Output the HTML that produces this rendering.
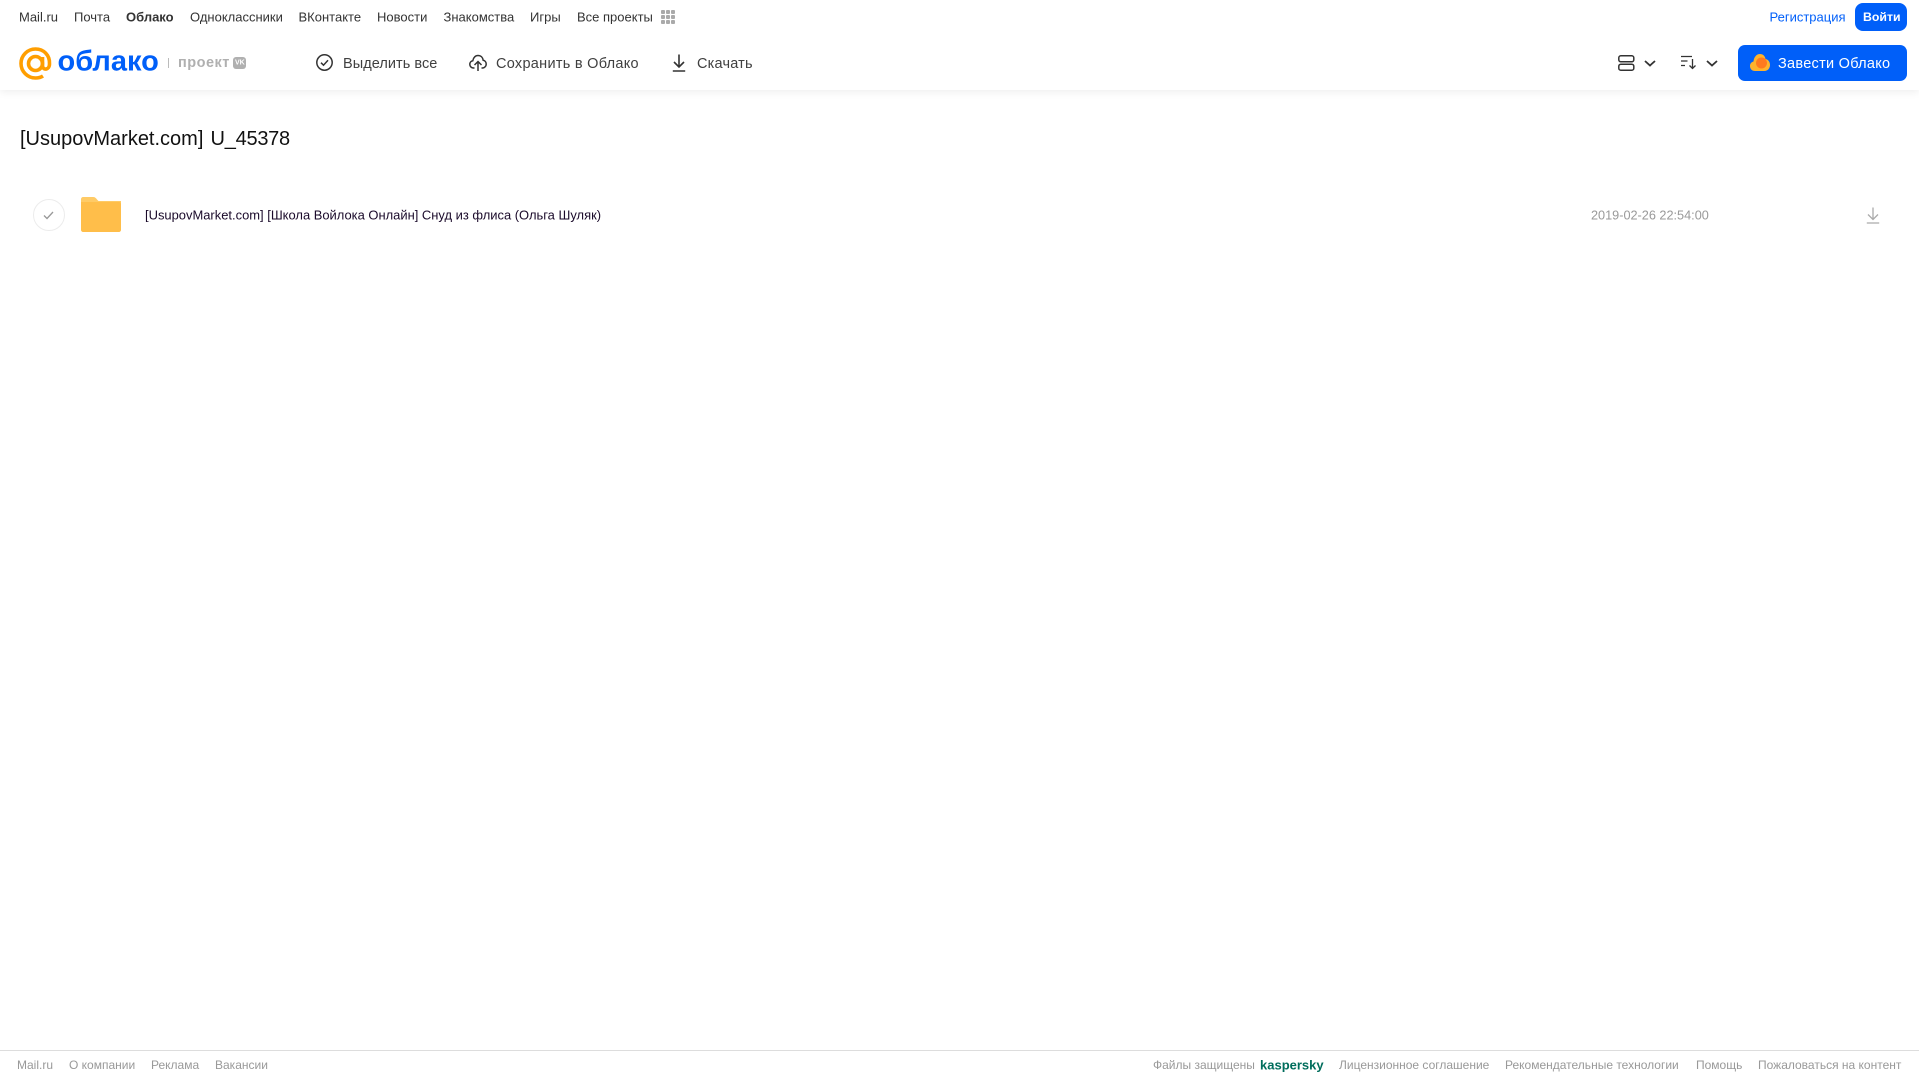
<!DOCTYPE html>
<html lang="ru"><head><meta charset="utf-8"><title>Облако</title>
<style>
html,body{margin:0;padding:0;background:#fff}
#p{position:relative;width:1919px;height:1079px;overflow:hidden;background:#fff;font-family:"Liberation Sans",Arial,sans-serif}
.t{position:absolute;white-space:nowrap;transform:translateY(-50%);line-height:1}
.n{font-size:13px;color:#333;top:16.5px}
.a{font-size:14.5px;color:#404040;top:63.5px}
.f{font-size:12px;color:#999;top:1064.5px}
svg{position:absolute;overflow:visible}
#hd{position:absolute;left:0;top:0;width:1919px;height:90px;background:#fff;box-shadow:0 2px 8px rgba(0,0,0,.07)}
</style></head><body><div id="p">
<div id="hd"></div>
<span class="t n" style="left:19px">Mail.ru</span>
<span class="t n" style="left:74px">Почта</span>
<span class="t n" style="left:126px;font-weight:bold">Облако</span>
<span class="t n" style="left:190px">Одноклассники</span>
<span class="t n" style="left:298.500px">ВКонтакте</span>
<span class="t n" style="left:377px">Новости</span>
<span class="t n" style="left:443.500px">Знакомства</span>
<span class="t n" style="left:530px">Игры</span>
<span class="t n" style="left:577px">Все проекты</span>
<svg style="left:660px;top:9px" width="16" height="16" fill="#aaa"><rect x="1" y="1" width="4" height="4" rx="1"/><rect x="6" y="1" width="4" height="4" rx="1"/><rect x="11" y="1" width="4" height="4" rx="1"/><rect x="1" y="6" width="4" height="4" rx="1"/><rect x="6" y="6" width="4" height="4" rx="1"/><rect x="11" y="6" width="4" height="4" rx="1"/><rect x="1" y="11" width="4" height="4" rx="1"/><rect x="6" y="11" width="4" height="4" rx="1"/><rect x="11" y="11" width="4" height="4" rx="1"/></svg>
<span class="t n" style="left:1769.500px;color:#005ff9">Регистрация</span>
<div style="position:absolute;left:1855px;top:3px;width:52px;height:28px;border-radius:8px;background:#005ff9"></div>
<span class="t n" style="left:1863px;color:#fff;font-weight:bold;font-size:12.300px">Войти</span>

<svg style="left:19px;top:47px" width="33" height="33" viewBox="0 0 33 33" fill="none" stroke="#ff9e00" stroke-width="3.600"><circle cx="16.500" cy="16.500" r="7"/><path d="M23.500 10v8.500c0 5 6.800 5 7-1.500C31 8 24.500 2 16.500 2 8.500 2 2 8.500 2 16.500S8.500 31 16.500 31c3 0 5.500-.7 7.500-2"/></svg>
<span class="t" style="left:57.500px;top:61.500px;font-size:29px;font-weight:bold;color:#005ff9">облако</span>
<div style="position:absolute;left:168px;top:58px;width:1px;height:10px;background:#bbb"></div>
<span class="t" style="left:178px;top:62.500px;font-size:14.500px;font-weight:bold;color:#b0b0b0;letter-spacing:.5px">проект</span>
<div style="position:absolute;left:233px;top:57px;width:13px;height:12px;border-radius:3px;background:#b0b0b0"></div>
<span class="t" style="left:235px;top:63px;font-size:7px;font-weight:bold;color:#fff">VK</span>

<svg style="left:316px;top:54px" width="17" height="17" fill="none" stroke="#333" stroke-width="1.500"><circle cx="8.500" cy="8.500" r="7.700"/><path d="M5 8.700l2.500 2.500 4.500-5"/></svg>
<span class="t a" style="left:343px;letter-spacing:.05px">Выделить все</span>
<svg style="left:469px;top:54px" width="18" height="18" fill="none" stroke="#333" stroke-width="1.500"><path d="M5.500 14H4.500C2 14 .8 12 .8 10.300c0-1.800 1.200-3.300 3-3.600C4.300 3.500 6.500 1.500 9 1.500c2.800 0 4.800 2 5.200 4.800 1.800.3 3 1.900 3 3.800 0 2-1.500 3.900-3.700 3.900h-1"/><path d="M9 17V8M5.500 11L9 7.500l3.500 3.500"/></svg>
<span class="t a" style="left:496px;letter-spacing:.28px">Сохранить в Облако</span>
<svg style="left:672px;top:54px" width="14" height="18" fill="none" stroke="#333" stroke-width="1.600"><path d="M7 .5v12M2 8l5 5 5-5M.8 17h12.400"/></svg>
<span class="t a" style="left:697px;letter-spacing:.2px">Скачать</span>

<svg style="left:1618px;top:55px" width="17" height="16" fill="none" stroke="#333" stroke-width="1.500"><rect x=".8" y=".8" width="15" height="6" rx="2"/><rect x=".8" y="9.200" width="15" height="6" rx="2"/></svg>
<svg style="left:1644px;top:60px" width="12" height="7" fill="none" stroke="#333" stroke-width="1.800"><path d="M1 1l5 4.500L11 1"/></svg>
<svg style="left:1681px;top:55px" width="16" height="15" fill="none" stroke="#333" stroke-width="1.300"><path d="M0 1.500h11M0 6h6.500M0 10.500h4M11.500 4v9.500M8.500 10.500l3 3 3-3"/></svg>
<svg style="left:1706px;top:60px" width="12" height="7" fill="none" stroke="#333" stroke-width="1.800"><path d="M1 1l5 4.500L11 1"/></svg>

<div style="position:absolute;left:1738px;top:45px;width:169px;height:36px;border-radius:7px;background:#005ff9"></div>
<svg style="left:1750px;top:54px" width="20" height="17"><path d="M5 17C2 17 0 15 0 12c0-2.500 1.500-4 3.500-4.500C4 3 6.500 0 10 0c3 0 5 2 5.500 5 2.500.5 4.500 2.500 4.500 6 0 3.500-2.500 6-5.500 6z" fill="#ffb32c"/><circle cx="11.500" cy="9" r="5.500" fill="#ff7a1f"/></svg>
<span class="t" style="left:1778px;top:63.500px;font-size:14.500px;color:#fff;letter-spacing:.28px">Завести Облако</span>

<span class="t" style="left:20px;top:138.500px;font-size:20px;color:#111">[UsupovMarket.com]</span>
<span class="t" style="left:210.500px;top:138.500px;font-size:20px;color:#111;letter-spacing:-.25px">U_45378</span>

<div style="position:absolute;left:33px;top:199px;width:30px;height:30px;border:1px solid #ececec;border-radius:50%"></div>
<svg style="left:43px;top:211px" width="11" height="9" fill="none" stroke="#999" stroke-width="1.300"><path d="M1 4.500l3 3 6-6.500"/></svg>
<svg style="left:81px;top:197px" width="40" height="35"><path d="M2 0h10c2 0 3 1 4 2.500L17.500 4H40v6H0V2C0 1 1 0 2 0z" fill="#ffcb66"/><path d="M0 5h38c1 0 2 1 2 2v26c0 1-1 2-2 2H2c-1 0-2-1-2-2z" fill="#ffbe4a"/></svg>
<span class="t" style="left:145px;top:216px;font-size:12.950px;color:#1a0a2a">[UsupovMarket.com] [Школа Войлока Онлайн] Снуд из флиса (Ольга Шуляк)</span>
<span class="t" style="left:1591px;top:216px;font-size:12.700px;color:#999">2019-02-26 22:54:00</span>
<svg style="left:1866px;top:207px" width="14" height="17" fill="none" stroke="#aaa" stroke-width="1.300"><path d="M7 .5v11.500M2 7.500l5 5 5-5M.8 16h12.400"/></svg>

<div style="position:absolute;left:0;top:1050px;width:1919px;height:1px;background:#ddd"></div>
<span class="t f" style="left:17px">Mail.ru</span>
<span class="t f" style="left:69px">О компании</span>
<span class="t f" style="left:151px">Реклама</span>
<span class="t f" style="left:215px">Вакансии</span>
<span class="t f" style="left:1153px">Файлы защищены</span>
<span class="t f" style="left:1260px;color:#006d5c;font-weight:bold;font-size:13px">kaspersky</span>
<span class="t f" style="left:1339px">Лицензионное соглашение</span>
<span class="t f" style="left:1505px">Рекомендательные технологии</span>
<span class="t f" style="left:1696px">Помощь</span>
<span class="t f" style="left:1758px">Пожаловаться на контент</span>
</div></body></html>
